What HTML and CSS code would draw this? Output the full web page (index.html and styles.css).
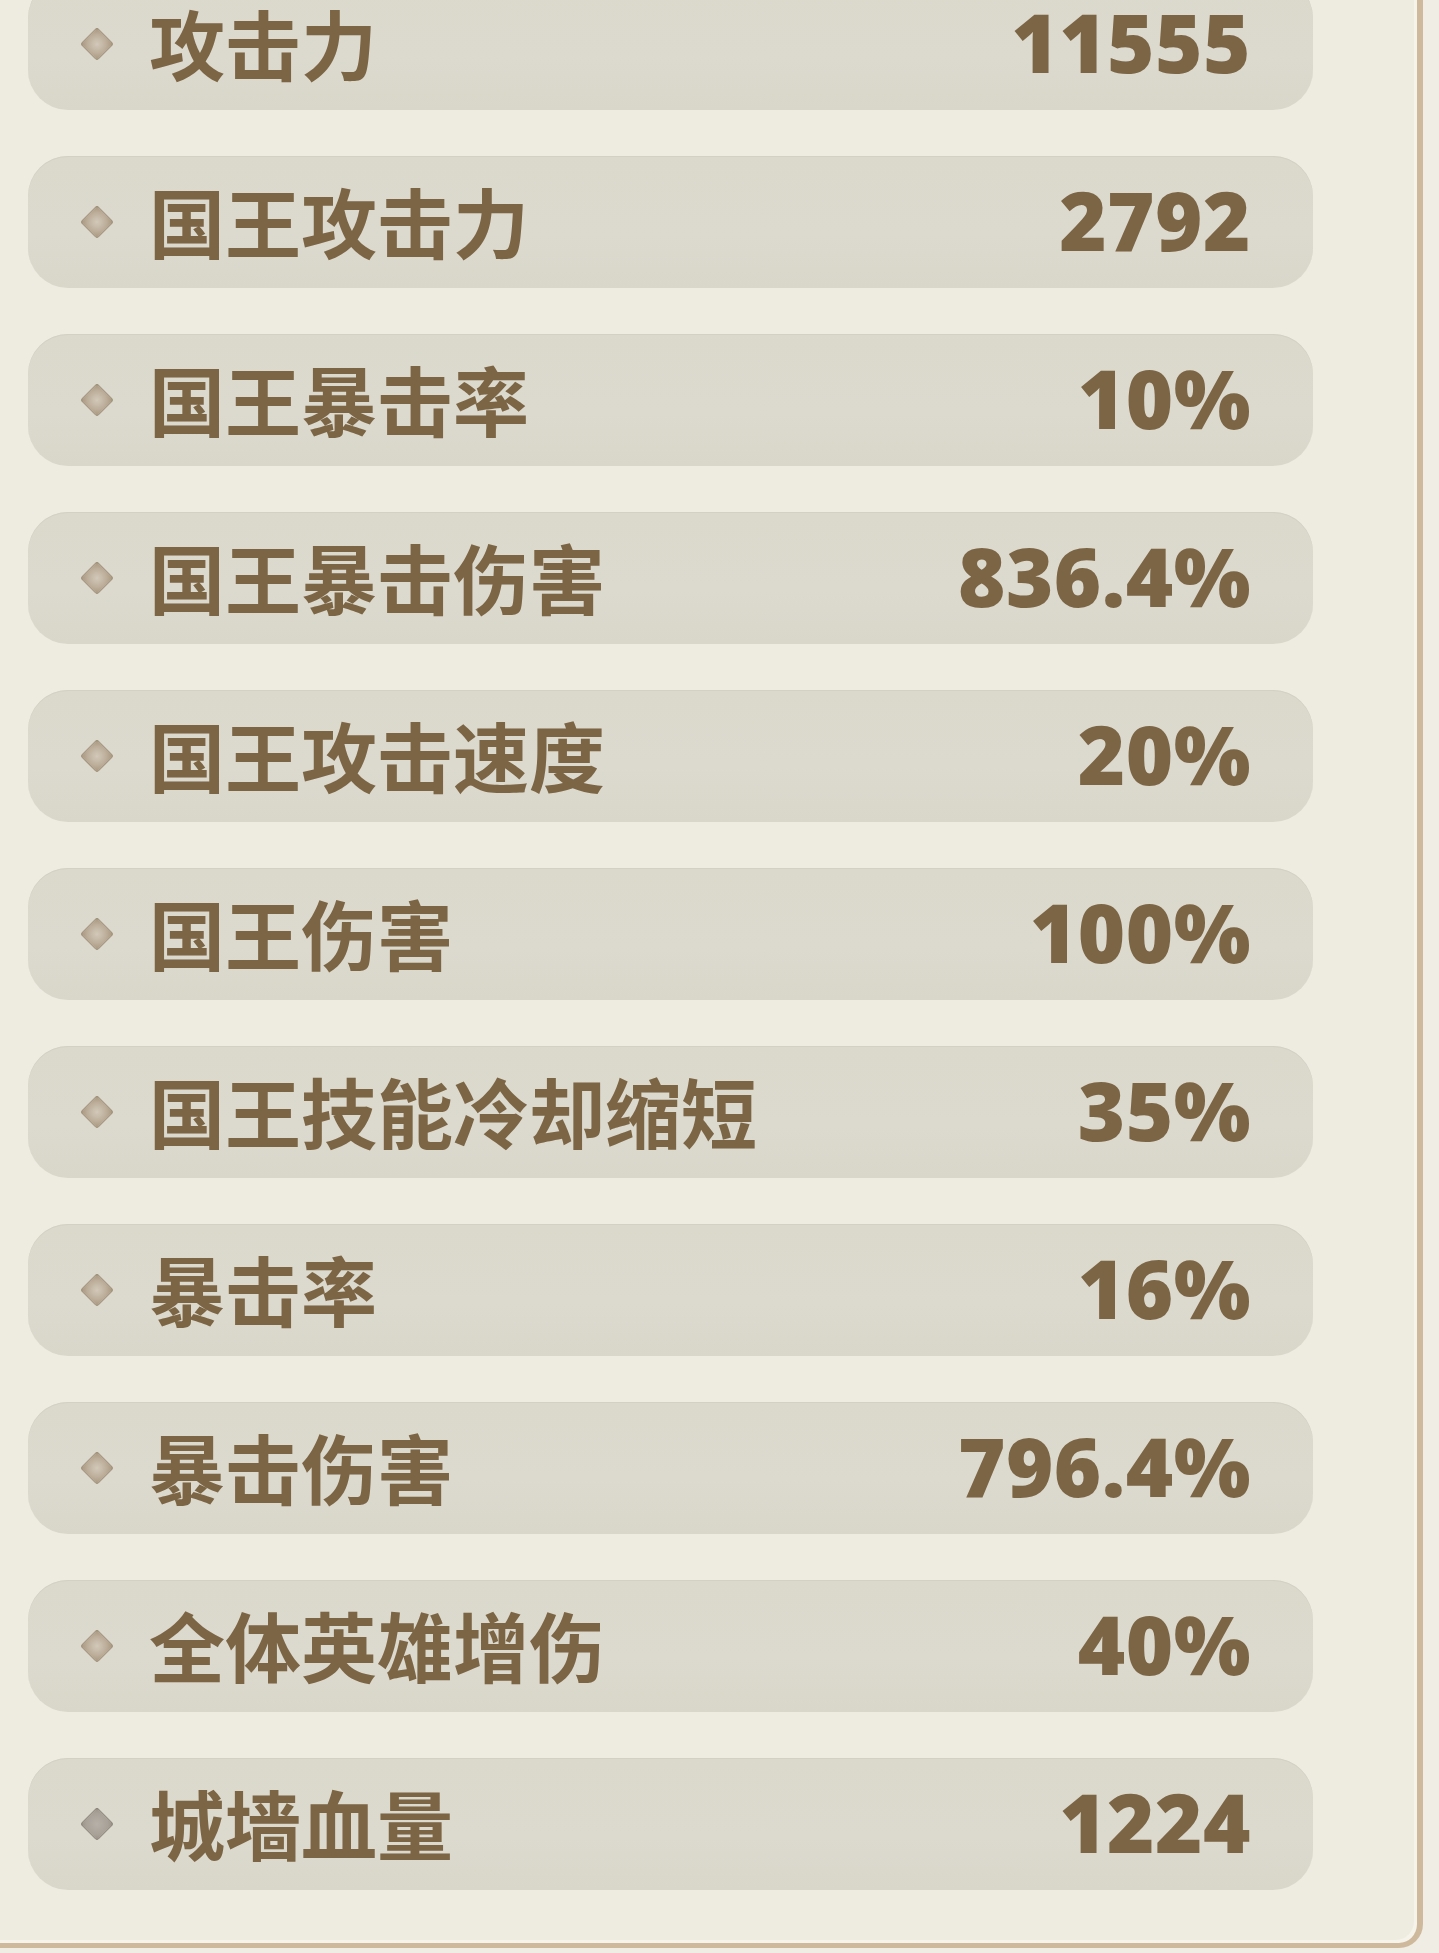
FILE: index.html
```html
<!DOCTYPE html>
<html lang="zh-CN">
<head>
<meta charset="utf-8">
<title>属性</title>
<link rel="stylesheet" href="styles.css">
</head>
<body>
<div class="panel">
  <ul class="stats">
    <li class="row"><span class="gem"></span><span class="name">攻击力</span><span class="val">11555</span></li>
    <li class="row"><span class="gem"></span><span class="name">国王攻击力</span><span class="val">2792</span></li>
    <li class="row"><span class="gem"></span><span class="name">国王暴击率</span><span class="val">10%</span></li>
    <li class="row"><span class="gem"></span><span class="name">国王暴击伤害</span><span class="val">836.4%</span></li>
    <li class="row"><span class="gem"></span><span class="name">国王攻击速度</span><span class="val">20%</span></li>
    <li class="row"><span class="gem"></span><span class="name">国王伤害</span><span class="val">100%</span></li>
    <li class="row"><span class="gem"></span><span class="name">国王技能冷却缩短</span><span class="val">35%</span></li>
    <li class="row"><span class="gem"></span><span class="name">暴击率</span><span class="val">16%</span></li>
    <li class="row"><span class="gem"></span><span class="name">暴击伤害</span><span class="val">796.4%</span></li>
    <li class="row"><span class="gem"></span><span class="name">全体英雄增伤</span><span class="val">40%</span></li>
    <li class="row"><span class="gem gem-grey"></span><span class="name">城墙血量</span><span class="val">1224</span></li>
  </ul>
</div>
</body>
</html>
```
FILE: styles.css
```css
html, body {
  margin: 0;
  padding: 0;
}
body {
  background: #efede4;
  width: 1439px;
  height: 1953px;
  overflow: hidden;
}
.panel {
  width: 1417px;
  height: 1943px;
  background: #eeece1;
  border-right: 6px solid #cfb99d;
  border-bottom: 5px solid #cfb99d;
  border-bottom-right-radius: 24px;
  box-shadow: inset -3px -3px 0 #f6f3ea;
  overflow: hidden;
  box-sizing: content-box;
}
.stats {
  list-style: none;
  margin: -22px 0 0 0;
  padding: 0 104px 0 28px;
  display: flex;
  flex-direction: column;
  gap: 46px;
}
.row {
  box-sizing: border-box;
  height: 132px;
  border-radius: 40px;
  background: linear-gradient(180deg, #dbd8cc 0%, #dcd9ce 60%, #d9d6ca 100%);
  box-shadow: inset 0 1px 0 #d3d0c4;
  display: flex;
  align-items: center;
  padding: 0 62px 5px 57px;
  color: #7c6545;
}
.gem {
  flex: none;
  width: 22px;
  height: 22px;
  margin-top: 5px;
  transform: rotate(45deg);
  border: 1.5px solid #9c8b74;
  border-radius: 3px;
  background: radial-gradient(circle at 50% 50%, #d3c9ba 0%, #bcae9a 60%, #a99780 100%);
}
.gem-grey {
  border-color: #867e74;
  background: radial-gradient(circle at 50% 50%, #b6b0a8 0%, #a8a198 70%, #9a9288 100%);
}
.name {
  margin-left: 40px;
  font-family: "Noto Sans CJK SC", "Noto Sans CJK JP", sans-serif;
  font-weight: 700;
  font-size: 76px;
  line-height: 1;
}
.val {
  margin-left: auto;
  font-family: "Open Sans", "DejaVu Sans", sans-serif;
  font-weight: 800;
  font-size: 81px;
  line-height: 1;
  letter-spacing: 0.5px;
}
```
